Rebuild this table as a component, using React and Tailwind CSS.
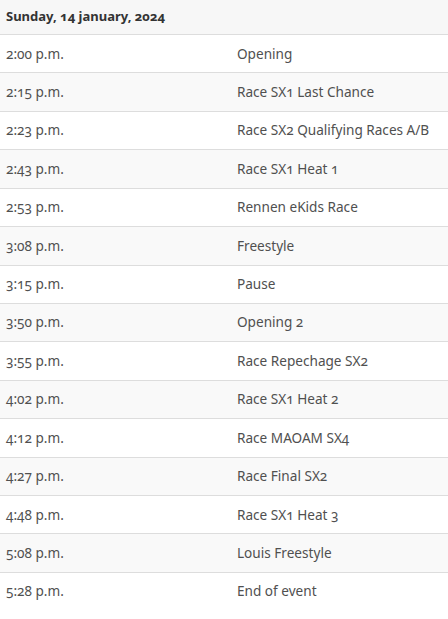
export default function App() {
  const rows = [
    ["2:00 p.m.", "Opening"],
    ["2:15 p.m.", "Race SX1 Last Chance"],
    ["2:23 p.m.", "Race SX2 Qualifying Races A/B"],
    ["2:43 p.m.", "Race SX1 Heat 1"],
    ["2:53 p.m.", "Rennen eKids Race"],
    ["3:08 p.m.", "Freestyle"],
    ["3:15 p.m.", "Pause"],
    ["3:50 p.m.", "Opening 2"],
    ["3:55 p.m.", "Race Repechage SX2"],
    ["4:02 p.m.", "Race SX1 Heat 2"],
    ["4:12 p.m.", "Race MAOAM SX4"],
    ["4:27 p.m.", "Race Final SX2"],
    ["4:48 p.m.", "Race SX1 Heat 3"],
    ["5:08 p.m.", "Louis Freestyle"],
    ["5:28 p.m.", "End of event"],
  ];
  return (
    <div
      className="w-[448px] min-h-[619px] bg-white text-[13.6px] text-[#505050]"
      style={{ fontFamily: '"Noto Sans", "Open Sans", sans-serif', fontVariantNumeric: "oldstyle-nums" }}
    >
      <div className="h-[34px] flex items-center px-[6px] bg-[#f7f7f7] font-bold text-[13px] text-[#333]">
        Sunday, 14 january, 2024
      </div>
      {rows.map(([t, e], i) => (
        <div
          key={i}
          className={`grid grid-cols-[231px_1fr] border-t border-[#dddddd] h-[38.43px] items-center ${
            i % 2 === 1 ? "bg-[#f9f9f9]" : "bg-white"
          }`}
        >
          <div className="px-[6px]">{t}</div>
          <div className="px-[6px]">{e}</div>
        </div>
      ))}
    </div>
  );
}
